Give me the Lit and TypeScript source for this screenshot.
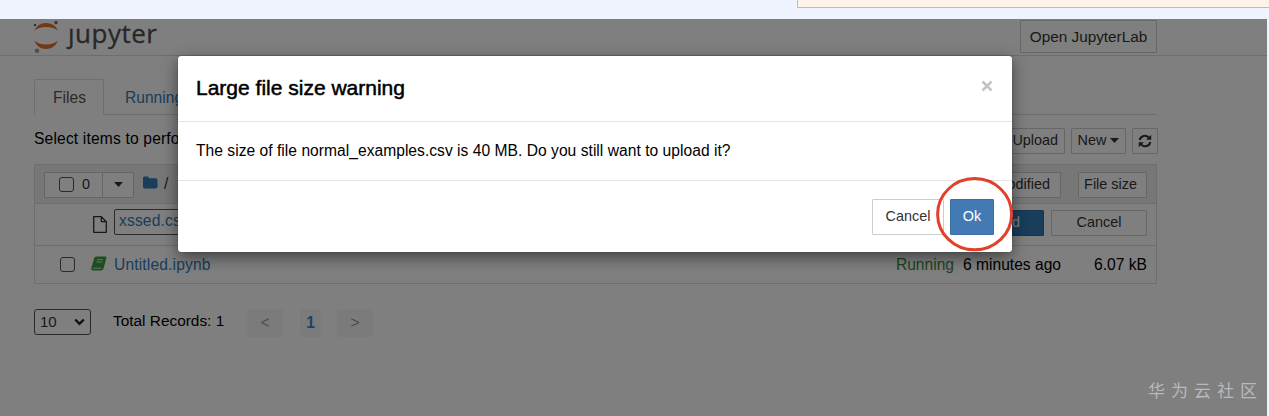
import {LitElement, css, html, svg} from 'lit';
import {customElement, property} from 'lit/decorators.js';

const buttonStyles = css`
  button {
    box-sizing: border-box;
    margin: 0;
    padding: 0 6px;
    border: 1px solid #ccc;
    border-radius: 1px;
    background-color: #fff;
    color: #333;
    font: inherit;
    font-size: 14.4px;
    line-height: 1;
    white-space: nowrap;
    cursor: pointer;
  }
`;

const caret = html`
  <svg width="9" height="5" viewBox="0 0 9 5">
    ${svg`<path d="M0 0H9L4.5 5Z" fill="currentColor"></path>`}
  </svg>
`;

@customElement('warning-modal')
export class WarningModal extends LitElement {
  @property() heading = '';
  @property() message = '';

  static styles = [
    buttonStyles,
    css`
      :host {
        display: block;
        box-sizing: border-box;
        width: 834px;
        height: 196px;
        border-radius: 3px;
        background-color: #fff;
        box-shadow: 0 5px 16px rgb(0 0 0 / 0.5), 0 0 1px rgb(0 0 0 / 0.6);
        color: #000;
      }

      .modal-header {
        display: flex;
        align-items: center;
        justify-content: space-between;
        height: 65px;
        padding: 0 18px;
        border-bottom: 1px solid #e5e5e5;
      }

      .modal-title {
        margin: 0;
        font-size: 21px;
        font-weight: 400;
        -webkit-text-stroke: 0.5px #000;
      }

      .close {
        border: none;
        padding: 0;
        height: 18px;
        width: 14px;
        margin-bottom: 3px;
        color: #c4c4c4;
      }

      .modal-body {
        display: flex;
        align-items: center;
        height: 58px;
        padding: 0 18px;
        border-bottom: 1px solid #e5e5e5;
        letter-spacing: 0.03px;
      }

      .modal-footer {
        display: flex;
        align-items: center;
        justify-content: flex-end;
        gap: 6px;
        height: 71px;
        padding: 0 18px;
      }

      .modal-footer button {
        width: 72px;
        height: 36px;
        padding: 0;
      }

      .ok-wrap {
        position: relative;
        display: flex;
      }

      .modal-footer .ok {
        width: 44px;
        border-color: #3a70a8;
        background-color: #447ab3;
        color: #fff;
      }

      .ring {
        position: absolute;
        left: -14px;
        top: -22px;
        pointer-events: none;
      }
    `,
  ];

  render() {
    return html`
      <div class="modal-header">
        <h4 class="modal-title">${this.heading}</h4>
        <button class="close" aria-label="Close">
          <svg width="14" height="14" viewBox="0 0 14 14">
            <path
              d="M2.5 2.5L11.5 11.5M11.5 2.5L2.5 11.5"
              stroke="currentColor"
              stroke-width="2.6"
            ></path>
          </svg>
        </button>
      </div>
      <div class="modal-body">${this.message}</div>
      <div class="modal-footer">
        <button>Cancel</button>
        <div class="ok-wrap">
          <button class="ok">Ok</button>
          <svg class="ring" width="78" height="75" viewBox="0 0 78 75">
            <ellipse
              cx="38.6"
              cy="37.2"
              rx="37"
              ry="35.6"
              fill="none"
              stroke="#e1402b"
              stroke-width="3"
            ></ellipse>
          </svg>
        </div>
      </div>
    `;
  }
}

@customElement('file-tree')
export class FileTree extends LitElement {
  static styles = [
    buttonStyles,
    css`
      :host {
        display: block;
      }

      .toolbar {
        display: flex;
        align-items: center;
        justify-content: space-between;
        height: 27px;
        margin: 12px 0 10px;
      }

      .hint {
        margin-bottom: 3px;
        letter-spacing: 0.17px;
      }

      .actions {
        display: flex;
        gap: 6px;
        margin-right: -1px;
      }

      .actions button {
        display: flex;
        align-items: center;
        justify-content: center;
        gap: 4px;
        height: 26px;
      }

      .actions .new {
        width: 55px;
        padding: 0;
      }

      .actions .refresh {
        width: 26px;
        padding: 0;
      }

      .list {
        border: 1px solid #ddd;
        border-radius: 1px;
      }

      .row {
        display: flex;
        align-items: center;
        box-sizing: border-box;
        height: 38px;
        padding: 0 9px;
      }

      .row + .row {
        border-top: 1px solid #ddd;
      }

      .list-header {
        padding-top: 1px;
        background-color: #eee;
      }

      .spacer {
        flex: 1;
      }

      .check {
        box-sizing: border-box;
        width: 15px;
        height: 15px;
        border: 1px solid #555;
        border-radius: 3px;
        background-color: #fff;
      }

      .selector {
        display: flex;
        box-sizing: border-box;
        width: 90px;
        height: 26px;
        border: 1px solid #ccc;
        background-color: #fff;
        color: #333;
        font-size: 14.4px;
      }

      .select-all {
        display: flex;
        align-items: center;
        gap: 8px;
        width: 58px;
        padding-left: 14px;
        box-sizing: border-box;
        border-right: 1px solid #ccc;
      }

      .select-menu {
        display: flex;
        flex: 1;
        align-items: center;
        justify-content: center;
      }

      .folder {
        margin: 0 6px 4px 9px;
      }

      .crumb {
        margin-bottom: 2px;
        color: #333;
      }

      .row button {
        height: 26px;
      }

      .modified {
        width: 118px;
        margin-right: 17px;
        padding: 0 10px;
        text-align: right;
      }

      .size {
        width: 69px;
        padding: 0 4px 0 0;
      }

      .row.renaming {
        height: 42px;
        padding-bottom: 4px;
      }

      .file-icon {
        margin: 3px 7px 0 49px;
      }

      .name-input {
        box-sizing: border-box;
        width: 500px;
        height: 26px;
        margin-bottom: 1px;
        padding: 0 4px 2px;
        border: 1px solid #555;
        border-radius: 2px;
        background-color: #fff;
        color: #337ab7;
        font: inherit;
        letter-spacing: 0.15px;
      }

      .row .upload {
        width: 84px;
        margin-right: 7px;
        padding: 0 23px 0 6px;
        border-color: #2e6da4;
        background-color: #337ab7;
        color: #fff;
        text-align: right;
      }

      .row .cancel {
        width: 96px;
      }

      .notebook .check {
        margin-left: 16px;
      }

      .book {
        margin: 0 7px 2px 16px;
      }

      .link {
        color: #337ab7;
        letter-spacing: 0.15px;
      }

      .running {
        margin-right: 9px;
        color: #3c8a3c;
      }

      .ago {
        width: 98px;
        text-align: right;
      }

      .bytes {
        width: 86px;
        text-align: right;
      }
    `,
  ];

  render() {
    return html`
      <div class="toolbar">
        <span class="hint">Select items to perform actions on them.</span>
        <div class="actions">
          <button>Upload</button>
          <button class="new">New ${caret}</button>
          <button class="refresh" aria-label="Refresh">
            <svg width="14" height="14" viewBox="0 0 14 14">
              <path
                d="M1.7 6A5.2 5.2 0 0 1 10.8 3.6M12.3 8A5.2 5.2 0 0 1 3.2 10.4"
                fill="none"
                stroke="currentColor"
                stroke-width="2"
              ></path>
              <path d="M13.2 .8V5.8H8.2ZM.8 13.2V8.2H5.8Z" fill="currentColor"></path>
            </svg>
          </button>
        </div>
      </div>
      <div class="list">
        <div class="row list-header">
          <div class="selector">
            <div class="select-all"><span class="check"></span>0</div>
            <div class="select-menu">${caret}</div>
          </div>
          <svg class="folder" width="15" height="13" viewBox="0 0 15 13">
            <path
              d="M0 2Q0 .5 1.5 .5H4.5Q6 .5 6 2.3H12.5Q14.5 2.3 14.5 4V10.5Q14.5 12.5 12.5 12.5H2Q0 12.5 0 10.5Z"
              fill="#337ab7"
            ></path>
          </svg>
          <span class="crumb">/</span>
          <span class="spacer"></span>
          <button class="modified">Last Modified</button>
          <button class="size">File size</button>
        </div>
        <div class="row renaming">
          <svg class="file-icon" width="14" height="17" viewBox="0 0 14 17">
            <path
              d="M.7 .7H8.3L13.3 5.7V16.3H.7ZM8.3 .7V5.7H13.3"
              fill="none"
              stroke="#333"
              stroke-width="1.3"
              stroke-linejoin="round"
            ></path>
          </svg>
          <input class="name-input" value="xssed.csv" />
          <span class="spacer"></span>
          <button class="upload">Upload</button>
          <button class="cancel">Cancel</button>
        </div>
        <div class="row notebook">
          <span class="check"></span>
          <svg class="book" width="16" height="15" viewBox="0 0 16 15">
            <path
              d="M5 .5H14.5Q15.8 .6 15.4 2L12.4 12.7Q11.9 14.5 10.2 14.5H1.8Q0 14.4 .3 12L3.2 2Q3.7 .6 5 .5Z"
              fill="#3c9a3c"
            ></path>
            <path
              d="M6 3.7H12M5.3 6H11.3M1.8 12.2H10.3"
              fill="none"
              stroke="#c8e2c8"
              stroke-width="1"
            ></path>
          </svg>
          <span class="link">Untitled.ipynb</span>
          <span class="spacer"></span>
          <span class="running">Running</span>
          <span class="ago">6 minutes ago</span>
          <span class="bytes">6.07 kB</span>
        </div>
      </div>
    `;
  }
}

@customElement('app-root')
export class AppRoot extends LitElement {
  static styles = [
    buttonStyles,
    css`
      :host {
        display: flex;
        flex-direction: column;
        height: 416px;
        overflow: hidden;
        background-color: #eef3fe;
        color: #000;
        font-family: 'Liberation Sans', Arial, sans-serif;
        font-size: 15.6px;
        line-height: 1.15;
      }

      .top-strip {
        display: flex;
        flex: none;
        height: 19px;
      }

      .notice {
        box-sizing: border-box;
        width: 480px;
        height: 8px;
        margin-left: 797px;
        flex: none;
        border: 1px solid #ecb086;
        border-top: none;
        background-color: #fff2e8;
      }

      .page {
        position: relative;
        box-sizing: border-box;
        width: 1267px;
        height: 397px;
        background-color: #fff;
      }

      .header {
        display: flex;
        justify-content: space-between;
        box-sizing: border-box;
        height: 37px;
        padding: 0 110px 0 33px;
        border-bottom: 1px solid #ddd;
      }

      .logo {
        display: flex;
        gap: 9px;
      }

      .mark {
        margin-top: 1px;
      }

      .word {
        color: #4e4e4e;
        font-family: 'Open Sans', sans-serif;
        font-size: 26px;
        line-height: 28px;
        letter-spacing: 0.5px;
        -webkit-text-stroke: 0.3px #4e4e4e;
      }

      .lab {
        width: 137px;
        height: 33px;
        margin-top: 1px;
        padding: 0;
        font-size: 15.3px;
      }

      .content {
        padding: 23px 110px 0 34px;
      }

      .tabs {
        display: flex;
        box-sizing: border-box;
        height: 36px;
        border-bottom: 1px solid #ddd;
      }

      .tab {
        box-sizing: border-box;
        height: 36px;
        padding: 9px 20px 0;
        border: 1px solid transparent;
        color: #337ab7;
      }

      .tab.active {
        width: 70px;
        padding: 9px 0 0 18px;
        border-color: #ddd;
        border-bottom-color: #fff;
        border-radius: 2px 2px 0 0;
        background-color: #fff;
        color: #555;
      }

      .pager {
        display: flex;
        align-items: center;
        height: 28px;
        margin-top: 24px;
      }

      .page-size {
        display: flex;
        align-items: center;
        justify-content: space-between;
        box-sizing: border-box;
        width: 57px;
        height: 26px;
        margin-bottom: 1px;
        padding: 0 5px;
        border: 1px solid #555;
        border-radius: 3px;
        color: #333;
        font-size: 15px;
      }

      .total {
        width: 134px;
        margin: 0 0 3px 22px;
        font-size: 15.4px;
      }

      .step {
        display: flex;
        align-items: center;
        justify-content: center;
        width: 36px;
        height: 28px;
        margin-top: 1px;
        border-radius: 2px;
        background-color: #f7f7f7;
        color: #999;
      }

      .step.current {
        width: 21px;
        margin: 1px 16px 0 17px;
        color: #3b82d0;
        font-weight: 700;
      }

      .backdrop {
        position: absolute;
        inset: 0;
        background-color: rgb(0 0 0 / 0.5);
      }

      warning-modal {
        position: absolute;
        left: 178px;
        top: 37px;
      }

      .watermark {
        position: absolute;
        right: 4px;
        bottom: 16px;
        color: #b9b9b9;
        font-family: 'Noto Sans CJK SC', sans-serif;
        font-size: 17px;
        line-height: 20px;
        letter-spacing: 6px;
      }
    `,
  ];

  render() {
    return html`
      <div class="top-strip"><div class="notice"></div></div>
      <div class="page">
        <div class="header">
          <div class="logo">
            <svg class="mark" width="26" height="34" viewBox="0 0 26 34">
              <path
                d="M1.3 10.6Q4.5 3.2 13 3.1Q21.8 3.2 25 10.6Q20.5 7.1 13 7Q5.5 7.1 1.3 10.6ZM1.3 20.4Q5.5 24.4 13 24.5Q20.5 24.4 25 20.4Q21.8 28.8 13 29Q4.5 28.8 1.3 20.4Z"
                fill="#e46e2e"
              ></path>
              <circle cx="22.9" cy="2.6" r="1.8" fill="#767677"></circle>
              <circle cx="2" cy="5" r="1.2" fill="#616262"></circle>
              <circle cx="4" cy="30.8" r="2.3" fill="#9e9e9e"></circle>
            </svg>
            <span class="word">ȷupyter</span>
          </div>
          <button class="lab">Open JupyterLab</button>
        </div>
        <div class="content">
          <div class="tabs">
            <div class="tab active">Files</div>
            <div class="tab">Running</div>
          </div>
          <file-tree></file-tree>
          <div class="pager">
            <div class="page-size">
              10
              <svg width="11" height="8" viewBox="0 0 11 8">
                <path
                  d="M1.2 1.5L5.5 5.8L9.8 1.5"
                  fill="none"
                  stroke="#222"
                  stroke-width="2.4"
                ></path>
              </svg>
            </div>
            <span class="total">Total Records: 1</span>
            <span class="step">&lt;</span>
            <span class="step current">1</span>
            <span class="step">&gt;</span>
          </div>
        </div>
        <div class="backdrop"></div>
        <warning-modal
          heading="Large file size warning"
          message="The size of file normal_examples.csv is 40 MB. Do you still want to upload it?"
        ></warning-modal>
        <div class="watermark">华为云社区</div>
      </div>
    `;
  }
}
